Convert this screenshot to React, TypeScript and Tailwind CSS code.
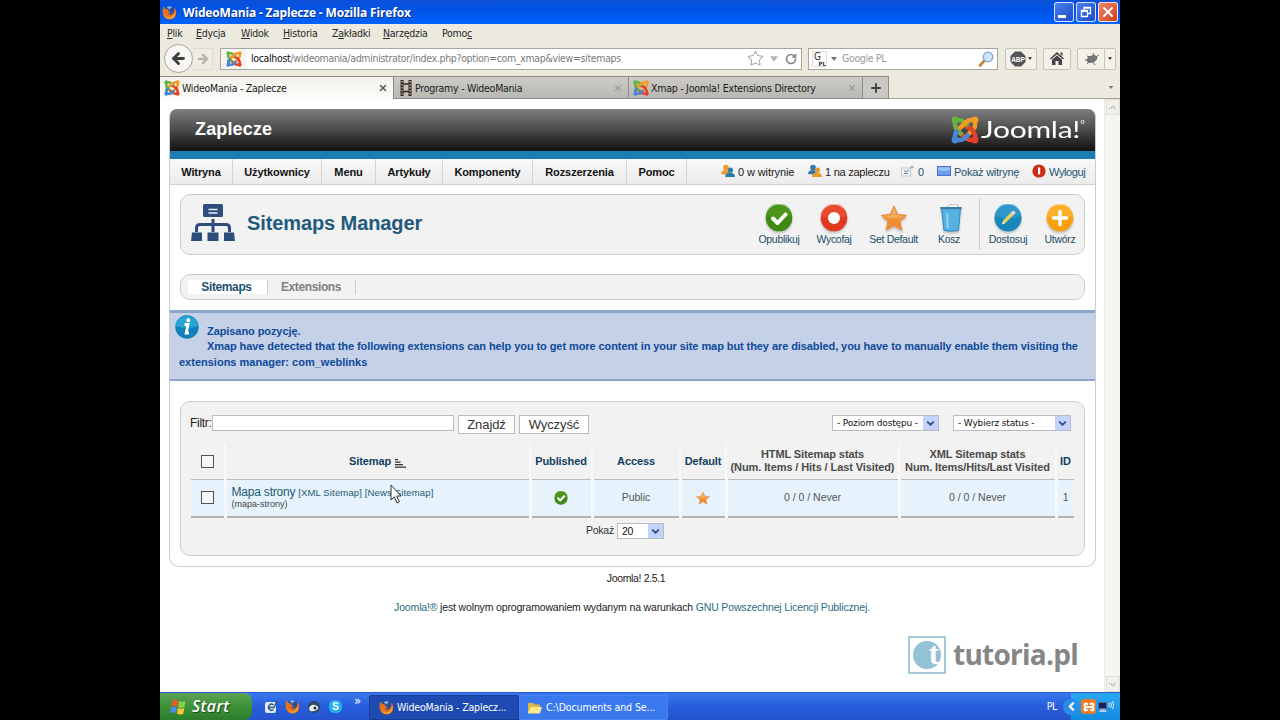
import type { ReactNode } from "react";
import { ArrowLeft, ArrowRight, ChevronDown, ChevronUp, Plus, RotateCw, Star, X } from "lucide-react";
import clsx from "clsx";

const TAHOMA = "font-['DejaVu_Sans_Condensed','DejaVu_Sans',sans-serif] [font-stretch:condensed]";
const ARIAL = "font-['Liberation_Sans',Arial,sans-serif] [font-stretch:normal]";
const TREBUCHET = "font-['Open_Sans','Noto_Sans',sans-serif] [font-stretch:normal]";

interface IconProps {
  className?: string;
}

function FirefoxIcon({ className }: IconProps) {
  return (
    <svg viewBox="0 0 16 16" className={clsx("shrink-0", className)}>
      <circle cx="8" cy="7.8" r="6.5" fill="#2b4f9e" />
      <path d="M5 2.5Q8 0 11 2.6Q8 3 8.5 5Z" fill="#7fb5ea" />
      <path
        d="M1 3.5Q.2 7.5 1 10Q3 15.6 8.4 15.4Q14.5 15 15.3 8.5Q15.5 5 13 2.6Q14 6.5 11.5 9.2Q9 11.5 6.2 9.2Q8.5 9 9.4 7.4Q6.8 7.5 7 5.8Q5.2 4 3.7 4.4Q2.4 3.3 2.5 1.5Q1.2 2.2 1 3.5Z"
        fill="#e8701a"
      />
      <path d="M2 9Q5 14.5 9.5 13.2Q13.5 11.8 14 6.5Q15 11 11.5 13.8Q5 16.6 2 9Z" fill="#f9b233" />
    </svg>
  );
}

function JoomlaIcon({ className }: IconProps) {
  return (
    <svg viewBox="0 0 28 28" className={clsx("shrink-0", className)} fill="none" strokeWidth="4.4" strokeLinejoin="round">
      <path d="M4 24V20Q4 16.5 6.5 14L13 8Q15 6 17.5 8.5" stroke="#4a86d2" />
      <path d="M24 24H20Q16.5 24 14 21.5L7 15" stroke="#e8412a" />
      <path d="M24 4V9Q24 12 21.5 14L15 20.5" stroke="#f59c25" />
      <path d="M10 8L20.5 13Q22.5 16 24 19V24" stroke="#e8412a" />
      <path d="M4 4V9Q4 12 6.5 14.5L11 19" stroke="#69b33e" />
      <path d="M4 4H8Q11 4 13.5 6.5L17 10" stroke="#69b33e" />
      <path d="M24 4H20Q17 4 14.5 6.5L8 13" stroke="#f59c25" />
      <path d="M4 24V20Q4 17 7 14.5M4 24H9Q12 24 14 22L18 18" stroke="#4a86d2" />
      <circle cx="4" cy="4" r="3.4" fill="#69b33e" />
      <circle cx="24" cy="4" r="3.4" fill="#f59c25" />
      <circle cx="4" cy="24" r="3.4" fill="#4a86d2" />
      <circle cx="24" cy="24" r="3.4" fill="#e8412a" />
    </svg>
  );
}

function FilmIcon() {
  return (
    <svg viewBox="0 0 12 16" className="h-4 w-3 shrink-0">
      <path d="M2 0V16M10 0V16" stroke="#32261c" strokeWidth="3" />
      <path d="M2 1V16M10 1V16" stroke="#cdbfa8" strokeWidth="1.2" strokeDasharray="1.5 1.5" />
      <path d="M3 4H9M3 11.5H9" stroke="#32261c" strokeWidth="1.5" />
    </svg>
  );
}

function UsersIcon({ flip }: { flip?: boolean }) {
  const [back, front] = flip ? ["#2f7aa5", "#e99a2c"] : ["#e99a2c", "#2f7aa5"];
  return (
    <svg viewBox="0 0 14 14" className="h-3.5 w-3.5 shrink-0">
      <circle cx="5" cy="3.6" r="2.8" fill={back} />
      <path d="M0 10Q.5 6 4.5 6Q9 6 9 11Z" fill={back} />
      <circle cx="9.5" cy="6" r="2.6" fill={front} />
      <path d="M4 13Q4.3 8.5 9 8.5Q13.8 8.5 14 13Z" fill={front} />
    </svg>
  );
}

function MailIcon() {
  return (
    <svg viewBox="0 0 14 14" className="h-3.5 w-3.5 shrink-0">
      <rect x=".5" y="4" width="9" height="8" fill="#edf2f6" stroke="#c3ccd4" />
      <path d="M3 9.5H7M3 6.5L5 8L8 6" stroke="#6f8aa0" fill="none" />
      <circle cx="11" cy="3" r="1.6" fill="#9fb2c2" />
    </svg>
  );
}

function ScreenIcon() {
  return (
    <svg viewBox="0 0 14 10" className="h-2.5 w-3.5 shrink-0">
      <rect x=".5" y=".5" width="13" height="9" fill="#6a9ff0" stroke="#4a74c4" />
      <path d="M1 1.5H13V4Q7 6 1 4Z" fill="#9cc2fa" />
    </svg>
  );
}

function PowerIcon() {
  return (
    <svg viewBox="0 0 14 14" className="h-3.5 w-3.5 shrink-0">
      <circle cx="7" cy="7" r="6.6" fill="#cf2c15" />
      <rect x="6" y="3.2" width="2.2" height="7.4" rx="1" fill="#fff" />
    </svg>
  );
}

function CheckBadge({ className }: IconProps) {
  return (
    <svg viewBox="0 0 28 28" className={className}>
      <circle cx="14" cy="14" r="13.3" fill="#3f8a14" />
      <path d="M1 12A13 13 0 0 1 27 12Q14 17 1 12Z" fill="#58a020" opacity=".5" />
      <path d="M8 14.5L12.5 19L20.5 10.5" fill="none" stroke="#fff" strokeWidth="4" strokeLinecap="round" strokeLinejoin="round" />
    </svg>
  );
}

function StarBadge({ className }: IconProps) {
  return (
    <svg viewBox="0 0 28 28" className={className}>
      <path d="M14 2L17.8 10.3L26.8 11.3L20 17.3L22 26.3L14 21.7L6 26.3L8 17.3L1.2 11.3L10.2 10.3Z" fill="#ef8e31" stroke="#e3914a" strokeLinejoin="round" />
      <path d="M14 3.5L17 11L25 12Q14 17 3 12L11 11Z" fill="#f9b66c" opacity=".7" />
    </svg>
  );
}

function UnpublishIcon() {
  return (
    <svg viewBox="0 0 28 28" className="h-7 w-7">
      <circle cx="14" cy="14" r="13.3" fill="#e03a1e" />
      <path d="M1 12A13 13 0 0 1 27 12Q14 17 1 12Z" fill="#f4694a" opacity=".4" />
      <circle cx="14" cy="14" r="6" fill="#fff" />
    </svg>
  );
}

function TrashIcon() {
  return (
    <svg viewBox="0 0 28 28" className="ml-1 h-7 w-7">
      <path d="M9 4L13 .5L20 0L22 4Z" fill="#f5f7f8" stroke="#9aa8b0" strokeWidth=".8" />
      <path d="M4.5 4H23.5L21.5 26.5Q14 28 7 26.5Z" fill="#56b0e2" stroke="#2e86b8" />
      <path d="M3.3 3H24.7V5.2H3.3Z" fill="#3b7fa6" />
      <path d="M10 9L10.8 24" stroke="#8dcdf0" strokeWidth="2.5" />
    </svg>
  );
}

function EditIcon() {
  return (
    <svg viewBox="0 0 28 28" className="h-7 w-7">
      <circle cx="14" cy="14" r="13.5" fill="#1686bb" />
      <path d="M1 12A13 13 0 0 1 27 12Q14 17 1 12Z" fill="#41a8d6" opacity=".5" />
      <path d="M10 18L19.5 8.5" stroke="#e8cf63" strokeWidth="3.6" />
      <path d="M18 10L20.5 7.5" stroke="#d9d9d2" strokeWidth="3.6" />
      <path d="M7.8 20.4L9 16.8L11.4 19.2Z" fill="#f5ead0" />
    </svg>
  );
}

function NewIcon() {
  return (
    <svg viewBox="0 0 28 28" className="h-7 w-7">
      <circle cx="14" cy="14" r="13.3" fill="#f9a010" />
      <path d="M1 12A13 13 0 0 1 27 12Q14 17 1 12Z" fill="#ffc043" opacity=".5" />
      <path d="M14 7.5V20.5M7.5 14H20.5" stroke="#fff" strokeWidth="3.4" strokeLinecap="round" />
    </svg>
  );
}

function SitemapIcon() {
  return (
    <svg viewBox="0 0 44 38" className="h-[38px] w-11 shrink-0">
      <rect x="12" width="20" height="13" rx="1.5" fill="#2f4d7c" />
      <path d="M17.5 5.5H26.5M17.5 9H26.5" stroke="#e6ecf5" strokeWidth="1.5" />
      <path d="M22 15V28M5.5 28V24Q5.5 20.5 9 20.5H35Q38.5 20.5 38.5 24V28" stroke="#2f4d7c" strokeWidth="3" fill="none" />
      <path d="M1 28.5H11V37H0ZM16.5 28.5H27.5V37H16.5ZM33 28.5H43L44 37H33Z" fill="#2f4d7c" />
    </svg>
  );
}

function InfoIcon() {
  return (
    <svg viewBox="0 0 24 24" className="h-6 w-6 shrink-0">
      <circle cx="12" cy="12" r="11.7" fill="#1180b8" />
      <path d="M.5 11A11.6 11.6 0 0 1 23.5 11Q12 15 .5 11Z" fill="#35b3e0" opacity=".7" />
      <circle cx="13.2" cy="5.2" r="2" fill="#fff" />
      <path d="M9.5 9.5H13L11.2 18H14" stroke="#fff" strokeWidth="2.8" fill="none" />
    </svg>
  );
}

function Caret({ className }: IconProps) {
  return (
    <svg viewBox="0 0 6 4" className={clsx("shrink-0", className)}>
      <path d="M0 0H6L3 4Z" fill="currentColor" />
    </svg>
  );
}

function WindowButton({ red, children }: { red?: boolean; children: ReactNode }) {
  return (
    <button
      className={clsx(
        "flex h-5 w-5 items-center justify-center rounded-[3px] border border-white/80 text-white",
        red ? "bg-linear-to-br from-[#ee8a6c] to-[#c93a14]" : "bg-linear-to-br from-[#4a80ee] to-[#1c49c8]"
      )}
    >
      {children}
    </button>
  );
}

function TitleBar() {
  return (
    <div className="flex h-6 shrink-0 items-center bg-linear-to-b from-[#0a50d8] via-[#0054e8] to-[#0062fb] pr-[2px] pl-[2px]">
      <FirefoxIcon className="h-[15px] w-[15px]" />
      <span className={clsx("ml-[6px] flex-1 pt-px text-[12px] font-bold tracking-[-0.17px] whitespace-nowrap text-white [text-shadow:1px_1px_0_#0a2f8a]", TREBUCHET)}>
        WideoMania - Zaplecze - Mozilla Firefox
      </span>
      <div className="flex gap-[2px]">
        <WindowButton>
          <span className="mt-2 mr-1 h-[3px] w-2 bg-white" />
        </WindowButton>
        <WindowButton>
          <svg viewBox="0 0 12 12" className="h-3 w-3" fill="none" stroke="#fff">
            <path d="M4 4V1.5H10.5V7.5H8M4 2H10.5" strokeWidth="1.3" />
            <path d="M1.5 4.5H7.5V10.5H1.5ZM1.5 5.3H7.5" strokeWidth="1.3" />
          </svg>
        </WindowButton>
        <WindowButton red>
          <X size={16} strokeWidth={2.8} className="shrink-0" />
        </WindowButton>
      </div>
    </div>
  );
}

// [before accelerator, accelerator, after, slot width class]
const browserMenu: [string, string, string, string][] = [
  ["", "P", "lik", "w-[29px]"],
  ["", "E", "dycja", "w-[45px]"],
  ["", "W", "idok", "w-[42px]"],
  ["", "H", "istoria", "w-[49px]"],
  ["Z", "a", "kładki", "w-[51px]"],
  ["", "N", "arzędzia", "w-[59px]"],
  ["Pomo", "c", "", "w-[40px]"],
];

function MenuBar() {
  return (
    <div className="flex h-5 shrink-0 items-center pl-[7px] text-[10.5px] tracking-[-0.25px] whitespace-nowrap text-[#2a2a2a]">
      {browserMenu.map(([before, key, after, width]) => (
        <span key={before + key + after} className={width}>
          {before}
          <u>{key}</u>
          {after}
        </span>
      ))}
    </div>
  );
}

function NavBar() {
  const button = "flex h-[22px] items-center justify-center rounded-[2px] border border-[#c6c3b9] bg-[#f3f1ea] text-[#444]";
  return (
    <div className="flex h-8 shrink-0 items-center pb-[3px] pl-1">
      <div className="flex h-[29px] w-[29px] shrink-0 items-center justify-center rounded-full border border-[#a5a29a] bg-[#f8f7f3]">
        <ArrowLeft size={17} strokeWidth={4} color="#3d3d3d" />
      </div>
      <div className="flex h-[22px] w-[20px] shrink-0 items-center justify-center border-y border-r border-[#dedbd1] bg-[#efece3]">
        <ArrowRight size={14} strokeWidth={4} color="#b5b3ae" />
      </div>
      <div className="ml-[7px] flex h-[22px] w-[582px] shrink-0 items-center border border-[#a9a69d] bg-white">
        <div className="flex h-5 w-[26px] shrink-0 items-center justify-center bg-[#f5f4f0]">
          <JoomlaIcon className="h-4 w-4" />
        </div>
        <span className="ml-1 flex-1 text-[10.5px] tracking-[-0.33px] whitespace-nowrap text-[#7b7b7b]">
          <span className="text-[#111]">localhost</span>/wideomania/administrator/index.php?option=com_xmap&amp;view=sitemaps
        </span>
        <Star size={17} strokeWidth={1.5} color="#a9a9a9" />
        <Caret className="mr-[7px] ml-[6px] h-[6px] w-2 text-[#b5b5b5]" />
        <RotateCw size={12} strokeWidth={3.4} color="#858585" className="mr-1" />
      </div>
      <div className="ml-[6px] flex h-[22px] w-[190px] shrink-0 items-center border border-[#a9a69d] bg-white pr-[3px] pl-[3px]">
        <div className="flex h-4 w-[15px] flex-col border border-[#ddd] text-[#333]">
          <span className="pl-px text-[10px] leading-[9px]">G</span>
          <span className="text-right text-[6px] leading-[5px] font-bold">PL</span>
        </div>
        <Caret className="ml-1 h-1 w-[6px] text-[#777]" />
        <span className="ml-[5px] flex-1 text-[10.5px] tracking-[-0.35px] text-[#999]">Google PL</span>
        <svg viewBox="0 0 16 16" className="h-4 w-4">
          <path d="M2 14.5L7 9" stroke="#c08a3c" strokeWidth="2.8" strokeLinecap="round" />
          <circle cx="10" cy="6" r="4.8" fill="#cfe6fa" stroke="#7fa8d0" strokeWidth="1.3" />
        </svg>
      </div>
      <button className={clsx(button, "ml-[7px] w-8 gap-[2px]")}>
        <svg viewBox="0 0 16 16" className="h-4 w-4">
          <path d="M5 .5H11L15.5 5V11L11 15.5H5L.5 11V5Z" fill="#555" />
          <text x="8" y="10.5" textAnchor="middle" fontSize="6.5" fontWeight="bold" fill="#fff" fontFamily="Liberation Sans">ABP</text>
        </svg>
        <Caret className="h-[3px] w-1 text-[#222]" />
      </button>
      <button className={clsx(button, "ml-[6px] w-[28px]")}>
        <svg viewBox="0 0 14 13" className="h-[13px] w-3.5" fill="#444">
          <path d="M7 0L14 6.5L13 7.5L7 2.2L1 7.5L0 6.5ZM10.5 .5H12.5V4L10.5 2.2Z" />
          <path d="M7 3.4L12 7.8V13H8.5V9H5.5V13H2V7.8Z" />
        </svg>
      </button>
      <div className="ml-[6px] flex">
        <button className={clsx(button, "w-[28px] rounded-r-none")}>
          <svg viewBox="0 0 18 14" className="h-3.5 w-[18px]" stroke="#666" fill="#777">
            <ellipse cx="10" cy="7" rx="5" ry="3" transform="rotate(-20 10 7)" />
            <path d="M3 8L7 8M5 12L8 9M11 10L13 13M14 5L17 3M8 5L5 4M12 4L11 1" />
          </svg>
        </button>
        <button className={clsx(button, "w-[11px] rounded-l-none border-l-0")}>
          <Caret className="h-[3px] w-1 text-[#222]" />
        </button>
      </div>
    </div>
  );
}

function BrowserTab({ icon, label, active, width }: { icon: ReactNode; label: string; active?: boolean; width: string }) {
  return (
    <div
      className={clsx(
        "flex shrink-0 items-center border-t border-r border-[#8e8c86] pr-[5px] pl-1",
        width,
        active ? "bg-linear-to-b from-[#f2f1ec] to-[#fbfbf9]" : "border-b bg-linear-to-b from-[#cccbc6] to-[#b9b8b3]"
      )}
    >
      {icon}
      <span className="ml-[2px] flex-1 pt-[2px] text-[10.5px] tracking-[-0.25px] whitespace-nowrap text-[#1a1a1a]">{label}</span>
      <X size={10} strokeWidth={active ? 3.5 : 2.5} color={active ? "#555" : "#8f8f8f"} />
    </div>
  );
}

function TabStrip() {
  return (
    <div className="flex h-[23px] shrink-0">
      <BrowserTab active width="w-[234px]" icon={<JoomlaIcon className="h-4 w-4" />} label="WideoMania - Zaplecze" />
      <BrowserTab width="w-[235px]" icon={<div className="mr-px ml-[2px]"><FilmIcon /></div>} label="Programy - WideoMania" />
      <BrowserTab width="w-[234px]" icon={<JoomlaIcon className="h-4 w-4" />} label="Xmap - Joomla! Extensions Directory" />
      <div className="flex w-[26px] items-center justify-center border-t border-r border-b border-[#8e8c86] bg-[#c9c8c3]">
        <Plus size={14} strokeWidth={3.4} color="#444" />
      </div>
      <div className="flex flex-1 items-center justify-end border-b border-[#a5a39d] pr-[6px]">
        <Caret className="h-[3px] w-[6px] text-[#777]" />
      </div>
    </div>
  );
}

const joomlaMenu = [
  { label: "Witryna", width: "w-[63px]" },
  { label: "Użytkownicy", width: "w-[89px]" },
  { label: "Menu", width: "w-[54px]" },
  { label: "Artykuły", width: "w-[67px]" },
  { label: "Komponenty", width: "w-[90px]" },
  { label: "Rozszerzenia", width: "w-[94px]" },
  { label: "Pomoc", width: "w-[60px]" },
];

const statusItems = [
  { id: "site", label: "0 w witrynie", icon: <UsersIcon />, width: "w-[87px]", link: false },
  { id: "admin", label: "1 na zapleczu", icon: <UsersIcon flip />, width: "w-[93px] tracking-[-0.25px]", link: false },
  { id: "mail", label: "0", icon: <MailIcon />, width: "w-[36px]", link: true },
  { id: "view", label: "Pokaż witrynę", icon: <ScreenIcon />, width: "w-[95px] tracking-[-0.25px]", link: true },
  { id: "logout", label: "Wyloguj", icon: <PowerIcon />, width: "w-[63px] tracking-[-0.4px]", link: true },
];

function JoomlaHeader() {
  return (
    <>
      <div className="flex h-[42px] items-center rounded-t-[7px] bg-linear-to-b from-[#808080] via-[#4a4a4a] to-[#121212] pr-2 pb-px pl-[25px]">
        <h1 className="flex-1 text-[18px] font-bold tracking-[0.15px] text-white">Zaplecze</h1>
        <JoomlaIcon className="h-7 w-7" />
        <span className="ml-[2px] w-[106px] whitespace-nowrap">
          <span className="inline-block origin-left scale-x-[1.25] font-['Lato','Open_Sans',sans-serif] text-[24px] leading-[28px] tracking-[-0.2px] text-white">
            Joomla!<sup className="-top-[10px] text-[9px]">°</sup>
          </span>
        </span>
      </div>
      <div className="h-2 bg-[#1b7db4]" />
      <div className="flex h-[26px] border-b border-[#d0d0d0] bg-linear-to-b from-[#f8f8f8] to-[#ececec]">
        {joomlaMenu.map((item) => (
          <span
            key={item.label}
            className={clsx(
              "flex shrink-0 items-center justify-center border-r border-[#d5d5d5] pt-[2px] text-[11px] font-bold tracking-[-0.1px] text-[#111]",
              item.width
            )}
          >
            {item.label}
          </span>
        ))}
        <div className="ml-[34px] flex items-center pb-px text-[11px] tracking-[-0.1px] whitespace-nowrap">
          {statusItems.map((item) => (
            <span key={item.id} className={clsx("flex items-center gap-[3px]", item.width, item.link ? "text-[#1d5472]" : "text-[#222]")}>
              {item.icon}
              <span className="pt-[2px]">{item.label}</span>
            </span>
          ))}
        </div>
      </div>
    </>
  );
}

function ToolbarButton({ label, width, children }: { label: string; width: string; children: ReactNode }) {
  return (
    <button className={clsx("flex flex-col items-center pt-[9px] text-[10.5px] leading-[14px] tracking-[-0.3px] whitespace-nowrap text-[#1d4d66]", width)}>
      <span className="drop-shadow-[0_2px_1px_#00000033]">{children}</span>
      {label}
    </button>
  );
}

function Toolbar() {
  return (
    <div className="mx-[10px] mt-[9px] flex h-[61px] rounded-[10px] border border-[#ccc] bg-[#f2f2f2]">
      <div className="flex flex-1 items-center pb-[3px] pl-[10px]">
        <SitemapIcon />
        <h2 className="ml-[12px] text-[20px] font-bold tracking-[-0.1px] text-[#225a7c]">Sitemaps Manager</h2>
      </div>
      <ToolbarButton label="Opublikuj" width="w-[54px]">
        <CheckBadge className="h-7 w-7" />
      </ToolbarButton>
      <ToolbarButton label="Wycofaj" width="w-[56px]">
        <UnpublishIcon />
      </ToolbarButton>
      <ToolbarButton label="Set Default" width="w-[63px]">
        <StarBadge className="h-7 w-7" />
      </ToolbarButton>
      <ToolbarButton label="Kosz" width="w-[48px]">
        <TrashIcon />
      </ToolbarButton>
      <div className="my-1 ml-[6px] w-px bg-[#ccc]" />
      <ToolbarButton label="Dostosuj" width="w-[56px]">
        <EditIcon />
      </ToolbarButton>
      <ToolbarButton label="Utwórz" width="w-[48px]">
        <NewIcon />
      </ToolbarButton>
    </div>
  );
}

function SelectBox({ value, width }: { value: string; width: string }) {
  return (
    <div className={clsx("flex h-4 items-center border border-[#b9bcc4] bg-white pl-[4px] whitespace-nowrap text-[#111]", width)}>
      <span className="flex-1 pt-[2px]">{value}</span>
      <span className="flex h-[14px] w-[15px] items-center justify-center bg-[#c3d3fb]">
        <ChevronDown size={11} strokeWidth={4.5} color="#37568f" />
      </span>
    </div>
  );
}

function Checkbox() {
  return <span className="mx-auto block h-[13px] w-[13px] border border-[#4a5560] bg-[#f7f7f5]" />;
}

const columns: { key: string; label: ReactNode; width: string; muted?: boolean }[] = [
  { key: "check", label: <Checkbox />, width: "w-[34px]" },
  {
    key: "sitemap",
    label: (
      <span className="inline-flex items-center gap-1">
        Sitemap
        <svg viewBox="0 0 11 9" className="mt-1 h-[9px] w-[11px]" stroke="#333" strokeWidth="1.3">
          <path d="M0 .7H3M0 3.2H5.5M0 5.7H8M0 8.2H11" />
        </svg>
      </span>
    ),
    width: "w-[305px]",
  },
  { key: "published", label: "Published", width: "w-[62px]" },
  { key: "access", label: "Access", width: "w-[88px]" },
  { key: "default", label: "Default", width: "w-[46px]" },
  {
    key: "html",
    label: (
      <>
        HTML Sitemap stats
        <br />
        (Num. Items / Hits / Last Visited)
      </>
    ),
    width: "w-[173px]",
    muted: true,
  },
  {
    key: "xml",
    label: (
      <>
        XML Sitemap stats
        <br />
        Num. Items/Hits/Last Visited
      </>
    ),
    width: "w-[157px]",
    muted: true,
  },
  { key: "id", label: "ID", width: "w-[18px]" },
];

function SitemapTable() {
  return (
    <table className="mt-[10px] w-[883px] table-fixed border-collapse text-center whitespace-nowrap">
      <thead>
        <tr className="h-[35px] border-b border-[#bbb]">
          {columns.map((col) => (
            <th
              key={col.key}
              className={clsx(
                "border-r-2 border-[#f9f9f9] p-0 text-[11px] leading-[13px] font-bold tracking-[-0.1px] last:border-r-0",
                col.width,
                col.muted ? "text-[#4a4a4a]" : "text-[#12405e]"
              )}
            >
              {col.label}
            </th>
          ))}
        </tr>
      </thead>
      <tbody>
        <tr className="h-[38px] border-b-2 border-[#b3b3b3] bg-[#e6f2fc] text-[10.5px] text-[#555] [&>td]:border-r-3 [&>td]:border-r-[#f6f9fb] [&>td]:p-0 [&>td:last-child]:border-r-0">
          <td>
            <Checkbox />
          </td>
          <td className="text-left">
            <div className="pl-[5px] text-[9.5px] leading-[13px] tracking-[0.15px] text-[#1d5a70]">
              <span className="text-[12px] tracking-[-0.2px]">Mapa strony</span> [XML Sitemap] [News Sitemap]
            </div>
            <div className="pl-[5px] text-[9px] leading-[11px] text-[#444]">(mapa-strony)</div>
          </td>
          <td>
            <CheckBadge className="mx-auto h-3.5 w-3.5" />
          </td>
          <td>Public</td>
          <td>
            <StarBadge className="mx-auto h-3.5 w-3.5" />
          </td>
          <td>0 / 0 / Never</td>
          <td>0 / 0 / Never</td>
          <td>1</td>
        </tr>
      </tbody>
    </table>
  );
}

function FilterForm() {
  const button = "h-[19px] border border-[#bbb] bg-white pt-px text-[13px] leading-[16px] tracking-[-0.1px] text-[#333]";
  return (
    <div className="mx-[10px] mt-5 h-[155px] rounded-[10px] border border-[#ccc] bg-[#f2f2f2] pt-[13px] pl-[10px]">
      <div className="flex items-start text-[12px] text-[#222]">
        <label className="-ml-px w-[22px] leading-[16px] tracking-[-0.3px]">Filtr:</label>
        <input className="h-4 w-[242px] border border-[#bbb] bg-white" />
        <button className={clsx(button, "ml-[4px] w-[57px]")}>Znajdź</button>
        <button className={clsx(button, "ml-1 w-[70px]")}>Wyczyść</button>
        <div className="ml-[243px] flex gap-[14px] font-['DejaVu_Sans','Liberation_Sans',sans-serif] text-[9px] tracking-[-0.15px]">
          <SelectBox value="- Poziom dostępu -" width="w-[107px]" />
          <SelectBox value="- Wybierz status -" width="w-[118px]" />
        </div>
      </div>
      <SitemapTable />
      <div className="mt-[5px] flex items-center gap-[3px] pl-[395px] text-[10.5px] tracking-[-0.25px] text-[#333]">
        Pokaż
        <SelectBox value="20" width="w-[47px]" />
      </div>
    </div>
  );
}

function SystemMessage() {
  return (
    <div className="mt-[10px] h-[71px] border-t-3 border-b-2 border-[#8ba5cb] bg-[#c5d1e6] px-[5px] pt-[2px]">
      <div className="flex h-6 gap-[8px]">
        <InfoIcon />
        <p className="pt-[9px] text-[11px] leading-[15px] font-bold tracking-[-0.078px] whitespace-nowrap text-[#0e4a9c]">
          Zapisano pozycję.
          <br />
          Xmap have detected that the following extensions can help you to get more content in your site map but they are disabled, you have to manually enable them visiting the
        </p>
      </div>
      <p className="mt-[15px] pl-1 text-[11px] leading-[16px] font-bold text-[#0e4a9c]">extensions manager: com_weblinks</p>
    </div>
  );
}

function Page() {
  return (
    <div className={clsx("flex w-[944px] flex-col bg-white pt-[10px]", ARIAL)}>
      <div className="ml-[9px] h-[458px] w-[927px] rounded-t-[7px] rounded-b-[10px] border-x border-b border-[#ccc]">
        <JoomlaHeader />
        <Toolbar />
        <div className="mx-[10px] mt-[19px] flex h-[26px] items-center rounded-[10px] border border-[#ccc] bg-[#f2f2f2] text-[12px] tracking-[-0.38px]">
          <span className="ml-[7px] w-[80px] border-r border-[#ccc] bg-white pr-[2px] text-center leading-[14px] font-bold text-[#1d5272]">Sitemaps</span>
          <span className="w-[88px] border-r border-[#ccc] pr-px text-center leading-[14px] font-bold text-[#808080]">Extensions</span>
        </div>
        <SystemMessage />
        <FilterForm />
      </div>
      <p className="flex h-6 items-center justify-center pl-[8px] text-[10.5px] tracking-[-0.35px] text-[#222]">Joomla! 2.5.1</p>
      <p className="flex h-[34px] items-center justify-center whitespace-pre text-[10.5px] tracking-[-0.155px] text-[#222]">
        <a className="text-[#2a6b80]">Joomla!®</a> jest wolnym oprogramowaniem wydanym na warunkach <a className="text-[#2a6b80]">GNU Powszechnej Licencji Publicznej.</a>
      </p>
      <div className="mt-[10px] ml-[748px] flex items-center">
        <div className="flex h-[38px] w-[38px] items-center justify-center border-2 border-[#a3c9d7]">
          <span className="flex h-[28px] w-[28px] justify-end rounded-full bg-[#93c2d4] pr-[2px] font-['Liberation_Serif',serif] text-[31px] leading-[25px] font-bold text-white">t</span>
        </div>
        <span className={clsx("ml-[7px] pb-px text-[28px] leading-[38px] font-bold tracking-[-0.75px] whitespace-nowrap text-[#868686]", TREBUCHET)}>
          tutoria.pl
        </span>
      </div>
    </div>
  );
}

function Taskbar() {
  return (
    <div className="flex h-7 shrink-0 items-stretch border-t border-[#2a5bd0] bg-linear-to-b from-[#3a78ee] via-[#285ddb] to-[#2454cc] text-[10.5px] whitespace-nowrap text-white">
      <div className="flex w-[92px] items-center rounded-r-[8px] bg-linear-to-b from-[#5aa455] via-[#3d9138] to-[#2c7d2b] pl-[10px]">
        <svg viewBox="0 0 17 16" className="h-4 w-[17px]">
          <path d="M2.5 1.5Q5 0 8 1.5L7 7.5Q4 6 1.3 7.5Z" fill="#ee5a2a" />
          <path d="M9 2Q12 3.5 15.5 2L14.5 8Q11 9.5 8 8Z" fill="#8fd04a" />
          <path d="M1.1 8.5Q4 7 6.8 8.5L6 14Q3 12.6 0 14Z" fill="#4a8df0" />
          <path d="M7.8 9Q11 10.5 14.3 9L13.3 15Q10 16 7 14.5Z" fill="#f8c832" />
        </svg>
        <span className={clsx("mb-[2px] ml-[5px] text-[16px] font-semibold tracking-[0.3px] italic [text-shadow:1px_1px_1px_#1a4a18]", TREBUCHET)}>Start</span>
      </div>
      <div className="flex w-[117px] items-center gap-[7px] pl-[12px]">
        <svg viewBox="0 0 14 14" className="h-3.5 w-3.5">
          <rect x="1" y="2" width="11" height="11" rx="2" fill="#dceaf8" />
          <path d="M9.5 5A3 3 0 1 0 9.5 9.5M4 7.5H10L13 1" stroke="#33577f" strokeWidth="1.4" fill="none" />
        </svg>
        <FirefoxIcon className="h-[15px] w-[15px]" />
        <svg viewBox="0 0 14 14" className="h-3.5 w-3.5">
          <circle cx="7" cy="7" r="6" fill="#2f4864" />
          <path d="M2 8Q4 4 8 5Q12 6 11 9Q8 12 3 11Z" fill="#e8eef4" />
          <circle cx="8" cy="8" r="1.5" fill="#203040" />
        </svg>
        <svg viewBox="0 0 16 16" className="h-[15px] w-[15px]">
          <rect x="1" y="1" width="14" height="14" rx="6" fill="#22b0ee" />
          <text x="8" y="12" textAnchor="middle" fontSize="11" fontWeight="bold" fill="#fff" fontFamily="Liberation Sans">S</text>
        </svg>
        <span className="mb-3 ml-[4px] text-[13px]">»</span>
      </div>
      <div className="mt-[2px] flex w-[150px] items-center rounded-[2px] border border-[#163d94] bg-[#1e4bb2] pl-[9px]">
        <FirefoxIcon className="h-[15px] w-[15px]" />
        <span className="ml-[3px] tracking-[-0.15px]">WideoMania - Zaplecz...</span>
      </div>
      <div className="mt-[2px] flex w-[149px] items-center rounded-[2px] border border-[#4a84f2] bg-[#3a78ee] pl-[8px]">
        <svg viewBox="0 0 14 12" className="h-3 w-3.5">
          <path d="M0 1H5L6.5 2.5H12V11H0Z" fill="#e2b73e" />
          <path d="M2.5 5H14L12 11.5H0Z" fill="#fbe78c" />
        </svg>
        <span className="ml-1 tracking-[-0.1px]">C:\Documents and Se...</span>
      </div>
      <div className="flex flex-1 items-center justify-end pr-[14px]">
        <span className="text-[10.5px] tracking-[-0.3px]">PL</span>
      </div>
      <div className="flex w-[49px] items-center gap-[2px] bg-linear-to-b from-[#2aa8f4] to-[#128be0]">
        <span className="-ml-2 flex h-4 w-4 shrink-0 items-center justify-center rounded-full bg-[#2a8ee8]">
          <ChevronDown size={13} strokeWidth={4.5} className="rotate-90" />
        </span>
        <span className="flex h-[15px] w-[15px] shrink-0 items-center justify-center rounded-[3px] bg-[#f07c24]">
          <svg viewBox="0 0 12 10" className="h-2.5 w-3" fill="none" stroke="#fff" strokeWidth="2">
            <path d="M5 2.5Q1.5 .5 1.5 3Q1.5 4 3 5Q1.5 6 1.5 7Q1.5 9.5 5 7.5M7 2.5Q10.5 .5 10.5 3Q10.5 4 9 5Q10.5 6 10.5 7Q10.5 9.5 7 7.5M3 5H9" />
          </svg>
        </span>
        <svg viewBox="0 0 16 14" className="h-3.5 w-4 shrink-0" fill="none">
          <rect x=".5" y="2.5" width="8" height="6" fill="#15205a" stroke="#5a6898" />
          <path d="M1 12H9L7 9.5H3Z" fill="#c8ccd8" />
          <path d="M10.5 3Q12 5 10.5 7M12.5 2Q14.5 5 12.5 8M14.5 1Q17 5 14.5 9" stroke="#dfe8f5" />
        </svg>
      </div>
    </div>
  );
}

export default function App() {
  return (
    <div className="flex h-[720px] w-[1280px] justify-center overflow-hidden bg-black">
      <div className={clsx("relative flex w-[960px] flex-col bg-[#ece9de]", TAHOMA)}>
        <TitleBar />
        <MenuBar />
        <NavBar />
        <TabStrip />
        <div className="flex h-[593px] bg-white">
          <Page />
          <div className="flex w-4 flex-col items-center justify-between border-l border-[#e9e8e3] bg-[#f6f5f1]">
            <span className="flex h-4 w-3.5 items-center justify-center border border-[#e0dfda] bg-[#f1f0eb]">
              <ChevronUp size={11} strokeWidth={3} color="#c2c1ba" />
            </span>
            <span className="flex h-4 w-3.5 items-center justify-center border border-[#e0dfda] bg-[#f1f0eb]">
              <ChevronDown size={11} strokeWidth={3} color="#c2c1ba" />
            </span>
          </div>
        </div>
        <Taskbar />
        {/* mouse pointer */}
        <svg viewBox="0 0 12 20" className="absolute top-[484px] left-[230px] h-5 w-3">
          <path d="M1 1V16L4.3 12.8L7 19L9.3 18L6.7 12H11Z" fill="#fff" stroke="#333" />
        </svg>
      </div>
    </div>
  );
}
